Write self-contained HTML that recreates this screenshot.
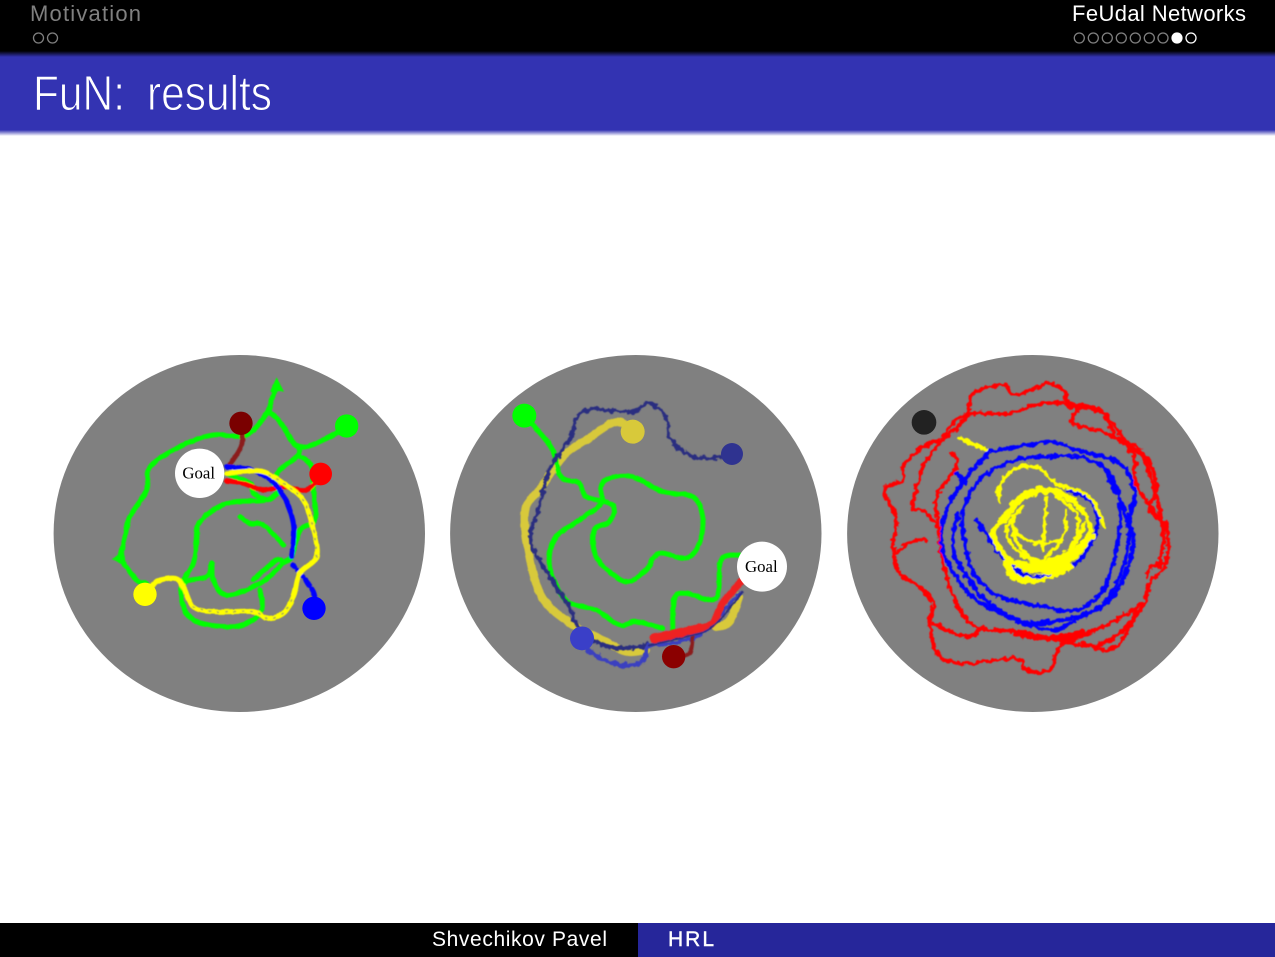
<!DOCTYPE html>
<html lang="en">
<head>
<meta charset="utf-8">
<title>FuN: results</title>
<style>
html,body{margin:0;padding:0;background:#fff}
body{width:1275px;height:957px;overflow:hidden}
svg{display:block}
text{font-family:"Liberation Sans",sans-serif}
polyline{fill:none;stroke-linejoin:round;stroke-linecap:round}
.g{stroke:#0f0;stroke-width:15}
.y{stroke:#ff0;stroke-width:15}
.b{stroke:#00f;stroke-width:15}
.r{stroke:#f00;stroke-width:14}
.b3{stroke:#00f;stroke-width:12}
.r3{stroke:#f00;stroke-width:11}
.goal{font-family:"Liberation Serif",serif;font-size:51px;fill:#000}
</style>
</head>
<body>
<svg width="1275" height="957" viewBox="0 0 1275 957" xmlns="http://www.w3.org/2000/svg">
<defs>
<linearGradient id="hb" x1="0" y1="0" x2="0" y2="1">
<stop offset="0" stop-color="#000"/><stop offset="1" stop-color="#3333b2"/>
</linearGradient>
<linearGradient id="sh" x1="0" y1="0" x2="0" y2="1">
<stop offset="0" stop-color="#3333b2"/><stop offset="1" stop-color="#fff"/>
</linearGradient>
<filter id="rag" x="-5%" y="-5%" width="110%" height="110%">
<feTurbulence type="fractalNoise" baseFrequency="0.06" numOctaves="2" seed="4" result="n"/>
<feDisplacementMap in="SourceGraphic" in2="n" scale="20" xChannelSelector="R" yChannelSelector="G"/>
<feGaussianBlur stdDeviation="1.5"/>
</filter>
<filter id="soft" x="-5%" y="-5%" width="110%" height="110%">
<feTurbulence type="fractalNoise" baseFrequency="0.05" numOctaves="1" seed="9" result="n"/>
<feDisplacementMap in="SourceGraphic" in2="n" scale="7" xChannelSelector="R" yChannelSelector="G"/>
<feGaussianBlur stdDeviation="1.5"/>
</filter>
<filter id="tb" x="-5%" y="-20%" width="110%" height="140%"><feGaussianBlur stdDeviation="0.35"/></filter>
</defs>

<rect width="1275" height="957" fill="#fff"/>

<!-- header -->
<rect width="1275" height="51" fill="#000"/>
<rect y="51" width="1275" height="6" fill="url(#hb)"/>
<rect y="57" width="1275" height="73" fill="#3333b2"/>
<rect y="130" width="1275" height="6" fill="url(#sh)"/>

<g filter="url(#tb)">
<text x="30" y="21" font-size="22" fill="#808080" textLength="111" lengthAdjust="spacing">Motivation</text>
<g fill="none" stroke="#808080" stroke-width="1.3">
<circle cx="38.5" cy="38" r="5"/><circle cx="52.5" cy="38" r="5"/>
<circle cx="1079.3" cy="38" r="5"/><circle cx="1093.3" cy="38" r="5"/><circle cx="1107.3" cy="38" r="5"/><circle cx="1121.3" cy="38" r="5"/><circle cx="1135.3" cy="38" r="5"/><circle cx="1149.3" cy="38" r="5"/><circle cx="1163" cy="38" r="5"/>
</g>
<circle cx="1177" cy="38" r="5.6" fill="#fff"/>
<circle cx="1191" cy="38" r="5" fill="none" stroke="#fff" stroke-width="1.3"/>
<text x="1072" y="21" font-size="22" fill="#fff" textLength="174" lengthAdjust="spacing">FeUdal Networks</text>
<text x="33" y="110" font-size="49" fill="#fff" stroke="#3333b2" stroke-width="1" textLength="92" lengthAdjust="spacingAndGlyphs">FuN:</text>
<text x="147" y="110" font-size="49" fill="#fff" stroke="#3333b2" stroke-width="1" textLength="125" lengthAdjust="spacingAndGlyphs">results</text>
</g>

<!-- panel 1 -->
<ellipse cx="239.3" cy="533.5" rx="185.7" ry="178.5" fill="#808080"/>
<g transform="translate(50 350) scale(.33333)">
<g filter="url(#soft)">
<polyline class="g" points="890,228 830,265 745,290 690,215 655,185"/>
<polyline class="g" points="655,185 680,100"/>
<polyline class="g" points="655,185 590,255 490,255 400,285 300,350 290,420 240,500 225,560 210,625"/>
<polyline class="g" points="210,625 260,690 290,700"/>
<polygon points="680,82 702,125 660,125" fill="#0f0"/>
<polygon points="185,627 222,603 225,648" fill="#0f0"/>
<polyline class="g" points="745,290 745,315 690,360 670,400"/>
<polyline class="g" points="745,315 785,350 790,420 795,510 750,540 725,620 700,640 630,700 530,735 490,690 485,640 470,680 400,700 400,770 440,815 530,830 590,820 635,780 630,720"/>
<polyline class="g" points="400,690 430,640 440,570 450,515 530,460 650,450 690,420"/>
<polyline class="g" points="530,370 600,400 610,430 650,450"/>
<polyline class="g" points="570,500 600,520 640,525 700,585"/>
<polyline class="g" points="610,690 680,630 700,640"/>
<polyline class="r" points="815,372 770,420 700,410 640,420 580,400 530,393"/>
<polyline stroke="#8b1a1a" stroke-width="14" points="573,220 575,285 535,350"/>
<polyline class="b" points="725,620 730,520 690,420 620,365 530,350"/>
<polyline class="b" stroke-dasharray="24 12" points="790,775 790,725 730,645"/>
<polyline class="y" points="285,733 320,695 375,685 400,710 430,770 490,785 610,785 650,805 700,790 730,740 750,670 800,620 790,540 760,450 700,400 640,365 580,365 530,370"/>
<polyline stroke="#b8b840" stroke-width="6" stroke-dasharray="3 22" points="430,770 490,785 610,785 650,805 700,790 730,740"/>
<polyline stroke="#b8b840" stroke-width="6" stroke-dasharray="3 22" points="800,620 790,540 760,450 700,400 640,365"/>
</g>
<circle cx="573" cy="220" r="35" fill="#7a0000"/>
<circle cx="890" cy="228" r="35" fill="#0f0"/>
<circle cx="812" cy="372" r="34" fill="#f00"/>
<circle cx="285" cy="733" r="35" fill="#ff0"/>
<circle cx="792" cy="775" r="35" fill="#00f"/>
<circle cx="449" cy="370" r="74" fill="#fff"/>
<text class="goal" x="397" y="385" textLength="98" lengthAdjust="spacingAndGlyphs">Goal</text>
</g>

<!-- panel 2 -->
<ellipse cx="635.8" cy="533.5" rx="185.7" ry="178.5" fill="#808080"/>
<g transform="translate(446 350) scale(.33333)">
<g filter="url(#soft)">
<polyline stroke="#d8c93a" stroke-width="24" points="560,245 510,215 420,270 350,320 280,420 240,470 240,560 270,700 310,770 390,830 470,870 540,905 600,900"/>
<polyline stroke="#d8c93a" stroke-width="26" points="810,830 850,815 880,740"/>
<polyline class="g" points="235,195 270,235 320,300 345,380 400,400 420,440 500,465 490,515 445,540 450,620 510,680 550,695 600,660 640,610 720,625 760,580 770,500 740,440 650,425 560,380 490,385 465,410 465,460 400,510 330,560 310,620 320,680 365,755 450,780 520,825 570,815 650,835"/>
<polyline class="g" points="680,840 685,745 720,730 810,745 825,630 880,615"/>
</g>
<g filter="url(#rag)">
<polyline stroke="#2b2f80" stroke-width="12" points="858,312 790,325 720,310 670,260 660,200 610,160 560,185 480,180 440,175 395,200 370,270 310,360 280,470 255,570 310,680 370,770 390,820 440,870 520,895 610,885"/>
<polyline stroke="#3a3fc0" stroke-width="14" points="408,865 440,910 520,945 590,935 610,890 720,870 790,830 880,730"/>
</g>
<g filter="url(#soft)">
<polyline stroke="#8b1a1a" stroke-width="12" points="683,920 730,910 740,860"/>
<polyline stroke="#ee2222" stroke-width="30" points="625,865 700,850 760,835"/>
<polyline stroke="#ee2222" stroke-width="22" points="760,835 800,820 830,760 885,695"/>
<polyline stroke="#2b2f80" stroke-width="6" points="610,885 720,860 800,830 890,725"/>
</g>
<circle cx="235" cy="197" r="36" fill="#0f0"/>
<circle cx="560" cy="245" r="36" fill="#d8c93a"/>
<circle cx="858" cy="312" r="33" fill="#2f3390"/>
<circle cx="408" cy="865" r="36" fill="#3a3fc8"/>
<circle cx="683" cy="920" r="35" fill="#8b0000"/>
<circle cx="948" cy="650" r="75" fill="#fff"/>
<text class="goal" x="897" y="666" textLength="98" lengthAdjust="spacingAndGlyphs">Goal</text>
</g>

<!-- panel 3 -->
<ellipse cx="1032.8" cy="533.5" rx="185.7" ry="178.5" fill="#808080"/>
<g transform="translate(843 350) scale(.33333)">
<g filter="url(#rag)">
<polyline class="r3" points="300,270 370,200 390,130 480,105 520,135 620,100 665,130 680,160 770,180 820,260 880,290 920,340 940,410 920,480 965,520 975,580 965,650 920,700 900,770 830,850 740,890 650,870 520,845 400,830 340,760 300,640 285,530"/>
<polyline class="r3" points="300,270 240,290 180,350 180,390 125,420 160,510 150,590 170,670 230,710 270,760 260,830 290,920 370,940 520,925 550,960 620,960 650,890 710,860 800,820 900,760"/>
<polyline class="r3" points="300,260 340,210 400,190 500,190 600,160 700,170 690,220 790,250 870,310 880,400 945,500"/>
<polyline class="r3" points="330,310 340,350 280,440 285,520 240,480 210,470 240,350 300,270"/>
<polyline class="r3" points="250,570 200,575 160,610"/>
<polyline class="r3" points="420,830 370,860 270,820"/>
<polyline class="r3" points="720,880 800,900 850,850 880,780"/>
<polyline class="r3" points="910,680 925,650 960,640"/>
<polyline class="r3" stroke-width="20" style="stroke-width:20" points="520,848 620,865 720,850"/>
<polyline class="r3" points="680,170 780,190 860,290 905,330 960,530 950,650"/>
<polyline stroke="#ff0" stroke-width="12" points="350,265 440,305"/>
<polyline class="b3" points="440,305 530,290 620,275 700,300 830,340 875,430 860,500 870,600 810,740 700,810 620,840 500,800 400,750 340,680 295,580 315,470 380,370 440,305"/>
<polyline class="b3" points="530,325 700,320 800,370 830,470 820,600 780,720 700,780 600,770 470,740 400,680 370,600 360,480 420,380 530,325"/>
<polyline class="b3" points="345,490 330,600 400,720 480,790 560,820 700,800 790,750 850,620 850,500 790,370"/>
<polyline class="b3" points="400,510 480,620 520,665 600,680 700,640 760,540 750,460 680,420"/>
<polyline class="b3" points="340,370 370,400"/>
<polyline stroke="#ff0" stroke-width="11" points="470,450 470,410 510,360 580,350 640,400 740,440 785,530"/>
<polyline stroke="#ff0" stroke-width="22" points="480,510 540,440 620,420 690,450"/>
<polyline stroke="#ff0" stroke-width="15" points="690,450 740,520 720,590 650,650 560,660 490,620 450,550 480,510"/>
<polyline stroke="#ff0" stroke-width="12" points="510,500 520,570 570,630 650,620 700,560 700,490 640,440"/>
<polyline stroke="#ff0" stroke-width="10" points="610,440 600,600"/>
<polyline stroke="#ff0" stroke-width="10" points="520,550 580,580 660,570"/>
<polyline stroke="#ff0" stroke-width="10" points="670,480 660,560 600,630"/>
<polyline stroke="#ff0" stroke-width="10" points="540,470 490,540 530,610 610,640 690,590 725,520"/>
<polyline stroke="#ff0" stroke-width="24" points="490,640 520,685 590,685 680,650"/>
<polyline stroke="#ff0" stroke-width="20" points="530,640 620,650 700,600 745,560"/>
<polyline class="b3" style="stroke-width:8" points="510,650 560,680 620,675"/>
</g>
<circle cx="243" cy="217" r="37" fill="#222"/>
</g>

<!-- footer -->
<rect y="923" width="638" height="34" fill="#000"/>
<rect x="638" y="923" width="637" height="34" fill="#26269a"/>
<g filter="url(#tb)">
<text x="432" y="946" font-size="21" fill="#fff" textLength="175" lengthAdjust="spacing">Shvechikov Pavel</text>
<text x="668" y="946" font-size="21" fill="#fff" stroke="#fff" stroke-width="0.4" textLength="46" lengthAdjust="spacing">HRL</text>
</g>
</svg>
<script>
document.querySelectorAll('polyline').forEach(function(el){
  var v=el.getAttribute('points').trim().split(/\s+/).map(function(s){return s.split(',').map(Number)});
  if(v.length<3)return;
  var o=[];
  for(var i=0;i<v.length-1;i++){
    var p0=v[Math.max(i-1,0)],p1=v[i],p2=v[i+1],p3=v[Math.min(i+2,v.length-1)];
    for(var k=0;k<8;k++){
      var t=k/8,t2=t*t,t3=t2*t,c=[0,1].map(function(a){
        return (.5*(2*p1[a]+(p2[a]-p0[a])*t+(2*p0[a]-5*p1[a]+4*p2[a]-p3[a])*t2+(3*p1[a]-p0[a]-3*p2[a]+p3[a])*t3)).toFixed(1)});
      o.push(c.join(','));
    }
  }
  o.push(v[v.length-1].join(','));
  el.setAttribute('points',o.join(' '));
});
</script>
</body>
</html>
